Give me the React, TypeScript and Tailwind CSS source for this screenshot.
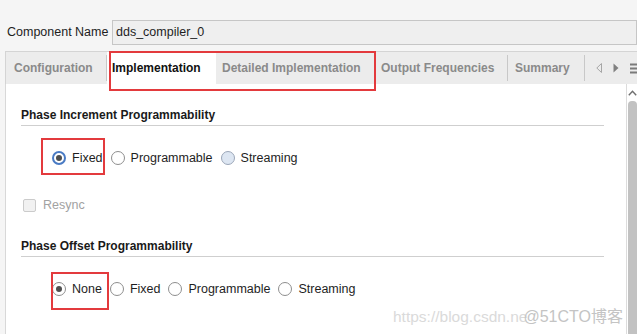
import React from 'react';

type RadioState = 'off' | 'on' | 'focus' | 'hover';

const Radio: React.FC<{ label: string; state?: RadioState }> = ({ label, state = 'off' }) => {
  let circle = 'border border-[#8e8e8e] bg-white';
  if (state === 'focus') circle = 'border-2 border-[#4a7bc4] bg-white';
  if (state === 'hover') circle = 'border border-[#9ba6b8] bg-[#dde6f2]';
  const dot = state === 'on' || state === 'focus';
  return (
    <div className="flex items-center gap-[6px]">
      <div className={`w-[14px] h-[14px] rounded-full flex items-center justify-center ${circle}`}>
        {dot && <div className="w-[6px] h-[6px] rounded-full bg-[#4f4f4f]" />}
      </div>
      <span className="text-[#1e1e1e] leading-[16px]">{label}</span>
    </div>
  );
};

const Tab: React.FC<{ label: string; w: string; selected?: boolean; sep?: boolean; pl?: string }> = ({ label, w, selected, sep, pl = 'pl-[8px]' }) => (
  <div className="flex items-stretch">
    <div className={`${w} ${pl} flex items-center font-bold text-[12px] ${selected ? 'bg-white text-[#111]' : 'text-[#8a8a8a]'}`}>
      {label}
    </div>
    {sep && <div className="w-px bg-[#c8c8c8] my-[3px]" />}
  </div>
);

const Heading: React.FC<{ children: React.ReactNode; pt: string }> = ({ children, pt }) => (
  <div className={`${pt} pb-[2px] border-b border-[#cfcfcf] font-bold text-[12px] leading-[15px] text-[#1a1a1a]`}>
    {children}
  </div>
);

const RedBox: React.FC<{ cls: string }> = ({ cls }) => (
  <div className={`absolute border-2 border-[#e33a3d] pointer-events-none ${cls}`} />
);

export default function App() {
  return (
    <div className="relative w-[637px] h-[334px] overflow-hidden bg-[#f5f5f5] text-[12.5px] font-['Liberation_Sans',Arial,sans-serif]">
      {/* Component name row */}
      <div className="h-[51px] pt-[20px] flex items-start">
        <div className="h-[25px] flex items-center pl-[7px] w-[115px] text-[#1e1e1e]">Component Name</div>
        <div className="h-[25px] w-[540px] flex items-center pl-[3px] bg-[#efefef] border border-[#c6c6c6] text-[#1e1e1e]">
          dds_compiler_0
        </div>
      </div>

      {/* Tab bar */}
      <div className="ml-[5px] h-[33px] flex items-stretch bg-[#ececec] border-t border-l border-[#d4d4d4]">
        <Tab label="Configuration" w="w-[100px]" pl="pl-[8px]" sep />
        <Tab label="Implementation" w="w-[109px]" pl="pl-[5px]" selected />
        <Tab label="Detailed Implementation" w="w-[157px]" pl="pl-[6px]" />
        <Tab label="Output Frequencies" w="w-[134px]" pl="pl-[8px]" sep />
        <Tab label="Summary" w="w-[76px]" pl="pl-[7px]" sep />
        <div className="flex items-center pl-[11px] gap-[11px]">
          <svg width="6" height="10" viewBox="0 0 6 10">
            <path d="M5.5 0.5 L0.8 5 L5.5 9.5 Z" fill="none" stroke="#a6a6a6" strokeWidth="1" />
          </svg>
          <svg width="6" height="10" viewBox="0 0 6 10">
            <path d="M0.5 0.5 L5.5 5 L0.5 9.5 Z" fill="#808080" />
          </svg>
          <svg width="8" height="11" viewBox="0 0 8 11">
            <rect x="0" y="0.5" width="8" height="2" fill="#7a7a7a" />
            <rect x="0" y="4.5" width="8" height="2" fill="#7a7a7a" />
            <rect x="0" y="8.5" width="8" height="2" fill="#7a7a7a" />
          </svg>
        </div>
      </div>

      {/* Content */}
      <div className="ml-[5px] h-[250px] flex bg-white border-l border-[#d8d8d8]">
        <div className="flex-1 pl-[15px] pr-[22px]">
          <Heading pt="pt-[24px]">Phase Increment Programmability</Heading>
          <div className="mt-[24px] h-[16px] pl-[31px] flex items-center gap-[8px]">
            <Radio label="Fixed" state="focus" />
            <Radio label="Programmable" />
            <Radio label="Streaming" state="hover" />
          </div>
          <div className="mt-[31px] h-[16px] pl-[2px] flex items-center gap-[7px]">
            <div className="w-[13px] h-[13px] rounded-[2px] border border-[#cbcbcb] bg-[#f1f1f1]" />
            <span className="text-[#a2a2a2]">Resync</span>
          </div>
          <Heading pt="pt-[26px]">Phase Offset Programmability</Heading>
          <div className="mt-[24px] h-[16px] pl-[31px] flex items-center gap-[8px]">
            <Radio label="None" state="on" />
            <Radio label="Fixed" />
            <Radio label="Programmable" />
            <Radio label="Streaming" />
          </div>
        </div>
        {/* Scrollbar */}
        <div className="w-[11px] border-l border-[#dcdcdc] bg-white flex flex-col items-center">
          <svg className="mt-[6px]" width="9" height="6" viewBox="0 0 9 6">
            <path d="M0.8 5.2 L4.5 1.2 L8.2 5.2" fill="none" stroke="#6f6f6f" strokeWidth="1.4" />
          </svg>
          <div className="mt-[5px] w-[9px] flex-1 rounded-t-[4px] bg-[#c2c2c2]" />
        </div>
      </div>

      {/* Watermark */}
      <div className="absolute left-[393px] top-[305px] flex items-baseline pointer-events-none whitespace-nowrap">
        <span className="text-[15.5px] text-[#dadada]">https://blog.csdn.ne</span>
        <span className="text-[16px] text-[#c4c4c4] -ml-[4px] font-['Liberation_Sans','Noto_Sans_CJK_SC',sans-serif]">@51CTO博客</span>
      </div>

      {/* Annotation boxes */}
      <RedBox cls="left-[109px] top-[51px] w-[267px] h-[40px]" />
      <RedBox cls="left-[41px] top-[138px] w-[64px] h-[37px]" />
      <RedBox cls="left-[51px] top-[272px] w-[58px] h-[38px]" />
    </div>
  );
}
